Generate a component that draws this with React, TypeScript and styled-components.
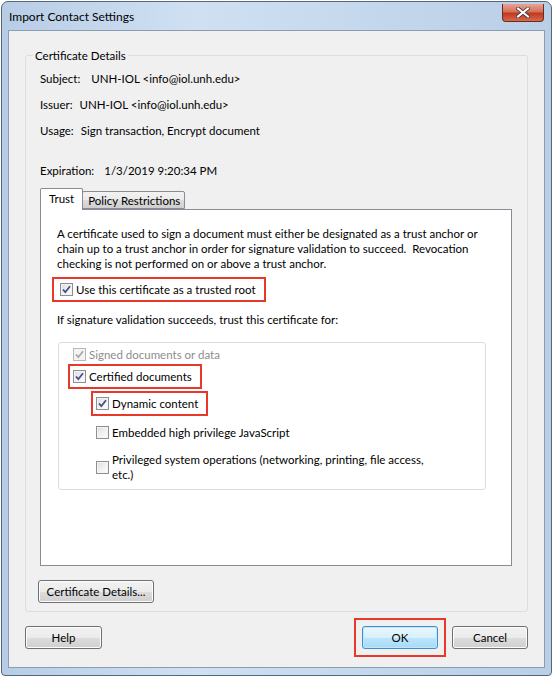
import React from 'react';
import styled, { createGlobalStyle } from 'styled-components';

const GlobalStyle = createGlobalStyle`
  body {
    margin: 0;
    background: #ffffff;
    font-family: Lato, "Liberation Sans", sans-serif;
    font-size: 11.5px;
    line-height: 15px;
    color: #000;
  }
`;

const Window = styled.div`
  box-sizing: border-box;
  width: 551px;
  height: 675px;
  margin: 1px 0 0 1px;
  padding: 0 6px 7px 6px;
  border: 1px solid #55657a;
  border-radius: 7px 7px 4px 4px;
  background: linear-gradient(90deg, #b7cde6 0%, #cfe0f2 35%, #c3d7ec 70%, #b9cfe6 100%);
  display: flex;
  flex-direction: column;
`;

const TitleBar = styled.div`
  height: 28px;
  display: flex;
  justify-content: space-between;
  align-items: center;
`;

const Title = styled.span`
  margin-left: 1px;
  font-size: 12px;
  color: #000;
`;

const CloseButton = styled.div`
  align-self: flex-start;
  margin: 2px 1px 0 0;
  width: 42px;
  height: 18px;
  box-sizing: border-box;
  border: 1px solid #6b2a22;
  border-top: none;
  border-radius: 0 0 4px 4px;
  background: linear-gradient(180deg, #e8a493 0%, #d8705b 45%, #c0391f 55%, #d56a4d 100%);
  display: flex;
  align-items: center;
  justify-content: center;
`;

const Client = styled.div`
  flex: 1;
  background: #f0f0f0;
  border: 1px solid #8c9cb1;
  padding: 17px 16px 17px 16px;
  display: flex;
  flex-direction: column;
`;

const Group = styled.fieldset`
  margin: 0;
  padding: 0 15px 8px 14px;
  border: 1px solid #d5dfe5;
  border-radius: 3px;
  display: flex;
  flex-direction: column;
`;

const Legend = styled.legend`
  margin-left: -7px;
  padding: 0 2px;
`;

const Details = styled.div`
  margin-top: 8px;
  display: flex;
  flex-direction: column;
  gap: 11px;
`;

const DetailRow = styled.div<{ $gap: number; $spaced?: boolean }>`
  display: flex;
  gap: ${p => p.$gap}px;
  margin-top: ${p => (p.$spaced ? 14 : 0)}px;
`;

const TabStrip = styled.div`
  margin-top: 10px;
  height: 21px;
  display: flex;
  align-items: flex-end;
  position: relative;
  z-index: 1;
`;

const Tab = styled.div<{ $active?: boolean }>`
  box-sizing: border-box;
  height: ${p => (p.$active ? 22 : 18)}px;
  padding: ${p => (p.$active ? '2px 8px 0 8px' : '1px 4px 0 5px')};
  border: 1px solid #898c95;
  border-bottom: ${p => (p.$active ? 'none' : '1px solid #898c95')};
  margin-bottom: ${p => (p.$active ? -1 : 0)}px;
  margin-left: ${p => (p.$active ? 0 : -1)}px;
  border-radius: 2px 2px 0 0;
  background: ${p => (p.$active ? '#ffffff' : 'linear-gradient(180deg, #f2f2f2 0%, #ebebeb 50%, #dddddd 50%, #cfcfcf 100%)')};
`;

const Panel = styled.div`
  height: 357px;
  box-sizing: border-box;
  background: #ffffff;
  border: 1px solid #898c95;
  padding: 16px 16px 0 16px;
  display: flex;
  flex-direction: column;
  align-items: flex-start;
`;

const Paragraph = styled.p`
  margin: 0;
  white-space: nowrap;
`;

const CheckRow = styled.label<{ $marked?: boolean; $muted?: boolean; $lead?: number }>`
  display: flex;
  align-items: center;
  gap: 3px;
  padding: 0 5px 0 ${p => p.$lead ?? 0}px;
  color: ${p => (p.$muted ? '#8d8d8d' : '#000')};
  outline: ${p => (p.$marked ? '2px solid #e8382a' : 'none')};
  outline-offset: 3px;
`;

const Hint = styled.p`
  margin: 15px 0 0 0;
`;

const Options = styled.div`
  margin: 15px 0 0 1px;
  box-sizing: border-box;
  width: 428px;
  height: 148px;
  border: 1px solid #d5dfe5;
  border-radius: 3px;
  padding: 4px 0 0 14px;
  display: flex;
  flex-direction: column;
  align-items: flex-start;
`;

const OptionSlot = styled.div<{ $top: number; $indent?: number }>`
  margin-top: ${p => p.$top}px;
  margin-left: ${p => p.$indent ?? 0}px;
`;

const Box = styled.span<{ $disabled?: boolean }>`
  width: 13px;
  height: 13px;
  box-sizing: border-box;
  flex: none;
  border: 1px solid ${p => (p.$disabled ? '#b8b8b8' : '#8e8f8f')};
  background: ${p => (p.$disabled ? '#f4f4f4' : 'linear-gradient(135deg, #dcdcdc 0%, #f0f0f0 50%, #fdfdfd 100%)')};
  box-shadow: inset 0 0 0 1px #f4f4f4;
  display: flex;
  align-items: center;
  justify-content: center;
`;

const Button = styled.button<{ $focused?: boolean; $width: number }>`
  width: ${p => p.$width}px;
  height: 23px;
  padding: 0;
  font: inherit;
  color: #000;
  border: 1px solid ${p => (p.$focused ? '#3c8fd0' : '#707070')};
  border-radius: 3px;
  background: ${p => (p.$focused
    ? 'linear-gradient(180deg, #eaf6fd 0%, #d9f0fc 50%, #bee6fd 50%, #a7d9f5 100%)'
    : 'linear-gradient(180deg, #f2f2f2 0%, #ebebeb 50%, #dddddd 50%, #cfcfcf 100%)')};
  box-shadow: inset 0 0 0 1px ${p => (p.$focused ? '#c2e5f8' : '#fcfcfc')};
`;

const DetailsButton = styled(Button)`
  margin: 14px 0 0 -2px;
  align-self: flex-start;
`;

const Footer = styled.div`
  margin-top: 14px;
  display: flex;
  align-items: center;
`;

const Spacer = styled.div`
  flex: 1;
`;

const OkWrap = styled.div`
  display: flex;
  outline: 2px solid #e8382a;
  outline-offset: 6px;
  margin-right: 14px;
`;

const Check = ({ on, disabled }: { on: boolean; disabled?: boolean }) => (
  <Box $disabled={disabled}>
    {on && (
      <svg width="11" height="11" viewBox="0 0 11 11">
        <path d="M2 5.5 L4.3 8.2 L9 2.3" fill="none" stroke={disabled ? '#a8a8a8' : '#3f4f86'} strokeWidth="1.8" />
      </svg>
    )}
  </Box>
);

export default function App() {
  return (
    <>
      <GlobalStyle />
      <Window>
        <TitleBar>
          <Title>Import Contact Settings</Title>
          <CloseButton>
            <svg width="14" height="11" viewBox="0 0 14 11">
              <path d="M2 1.5 L12 9.5 M12 1.5 L2 9.5" stroke="#3a3a3a" strokeWidth="3.6" strokeLinecap="square" />
              <path d="M2 1.5 L12 9.5 M12 1.5 L2 9.5" stroke="#ffffff" strokeWidth="2" strokeLinecap="square" />
            </svg>
          </CloseButton>
        </TitleBar>
        <Client>
          <Group>
            <Legend>Certificate Details</Legend>
            <Details>
              <DetailRow $gap={11}><span>Subject:</span><span>UNH-IOL &lt;info@iol.unh.edu&gt;</span></DetailRow>
              <DetailRow $gap={7}><span>Issuer:</span><span>UNH-IOL &lt;info@iol.unh.edu&gt;</span></DetailRow>
              <DetailRow $gap={7}><span>Usage:</span><span>Sign transaction, Encrypt document</span></DetailRow>
              <DetailRow $gap={10} $spaced><span>Expiration:</span><span>1/3/2019 9:20:34 PM</span></DetailRow>
            </Details>
            <TabStrip>
              <Tab $active>Trust</Tab>
              <Tab>Policy Restrictions</Tab>
            </TabStrip>
            <Panel>
              <Paragraph>
                A certificate used to sign a document must either be designated as a trust anchor or<br />
                chain up to a trust anchor in order for signature validation to succeed.&nbsp; Revocation<br />
                checking is not performed on or above a trust anchor.
              </Paragraph>
              <OptionSlot $top={11}>
                <CheckRow $marked $lead={3}><Check on />Use this certificate as a trusted root</CheckRow>
              </OptionSlot>
              <Hint>If signature validation succeeds, trust this certificate for:</Hint>
              <Options>
                <OptionSlot $top={0}>
                  <CheckRow $muted><Check on disabled />Signed documents or data</CheckRow>
                </OptionSlot>
                <OptionSlot $top={7}>
                  <CheckRow $marked><Check on />Certified documents</CheckRow>
                </OptionSlot>
                <OptionSlot $top={12} $indent={23}>
                  <CheckRow $marked><Check on />Dynamic content</CheckRow>
                </OptionSlot>
                <OptionSlot $top={14} $indent={23}>
                  <CheckRow><Check on={false} />Embedded high privilege JavaScript</CheckRow>
                </OptionSlot>
                <OptionSlot $top={12} $indent={23}>
                  <CheckRow>
                    <Check on={false} />
                    <span>Privileged system operations (networking, printing, file access,<br />etc.)</span>
                  </CheckRow>
                </OptionSlot>
              </Options>
            </Panel>
            <DetailsButton $width={116}>Certificate Details...</DetailsButton>
          </Group>
          <Footer>
            <Button $width={77}>Help</Button>
            <Spacer />
            <OkWrap><Button $width={76} $focused>OK</Button></OkWrap>
            <Button $width={76}>Cancel</Button>
          </Footer>
        </Client>
      </Window>
    </>
  );
}
